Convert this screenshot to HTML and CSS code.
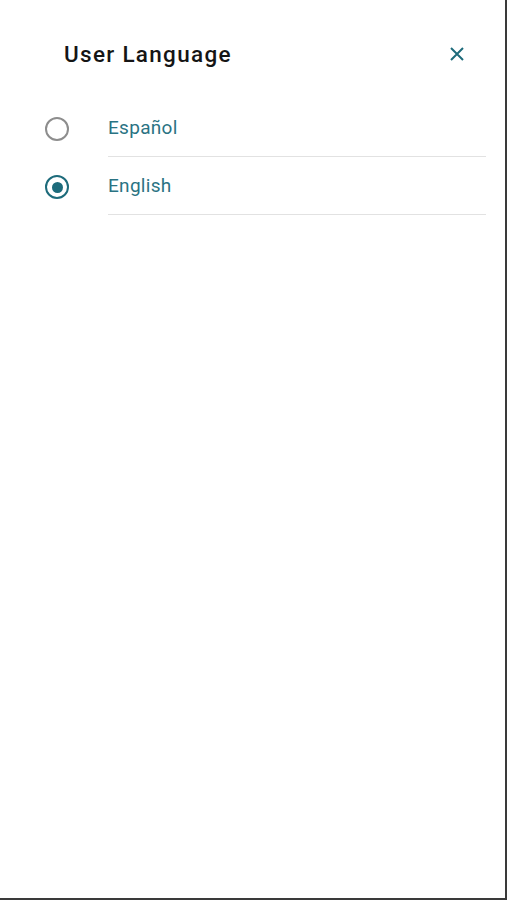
FILE: index.html
```html
<html lang="en">

<head>
    <meta charset="UTF-8">
    <meta name="viewport" content="width=device-width, initial-scale=1.0">
    <title>User Language</title>
    <link rel="stylesheet" href="styles.css">
</head>

<body>
    <div class="sheet">
        <div class="sheet-header">
            <h2>User Language</h2>
            <button class="close-btn" aria-label="Close">
                <svg width="14" height="14" viewBox="0 0 14 14">
                    <path d="M1 1 L13 13 M13 1 L1 13" stroke="#1d6b7b" stroke-width="2" fill="none" />
                </svg>
            </button>
        </div>

        <div class="lang-list">
            <label class="lang-item">
                <span class="radio-cell"><span class="radio"></span></span>
                <span class="lang-name">Español</span>
            </label>
            <label class="lang-item">
                <span class="radio-cell"><span class="radio checked"></span></span>
                <span class="lang-name">English</span>
            </label>
        </div>
    </div>
</body>

</html>
```

FILE: styles.css
```css
body {
    font-family: Roboto, "Noto Sans", Arial, sans-serif;
    margin: 0;
    background-color: #fff;
}

.sheet {
    box-sizing: border-box;
    height: 900px;
    border-right: 2px solid #3a3a3a;
    border-bottom: 2px solid #3a3a3a;
    background-color: #fff;
}

.sheet-header {
    display: flex;
    align-items: center;
    justify-content: space-between;
    padding: 32px 41px 0 64px;
    height: 44px;
}

.sheet-header h2 {
    margin: 0;
    font-size: 22.5px;
    font-weight: 500;
    letter-spacing: 1.3px;
    color: #151515;
    line-height: 44px;
}

.close-btn {
    border: none;
    background: none;
    padding: 0;
    width: 14px;
    height: 14px;
    cursor: pointer;
}

.close-btn svg {
    display: block;
}

.lang-list {
    margin-top: 23px;
}

.lang-item {
    display: flex;
    height: 58px;
    cursor: pointer;
}

.radio-cell {
    width: 108px;
    display: flex;
    align-items: center;
    padding-left: 45px;
    box-sizing: border-box;
}

.radio {
    box-sizing: border-box;
    width: 24px;
    height: 24px;
    border-radius: 50%;
    border: 2px solid #8d8d8d;
    display: flex;
    align-items: center;
    justify-content: center;
    margin-top: 2px;
}

.radio.checked {
    border: 2.5px solid #1d6b7b;
}

.radio.checked::after {
    content: "";
    width: 11px;
    height: 11px;
    border-radius: 50%;
    background-color: #1d6b7b;
}

.lang-name {
    flex: 1;
    display: flex;
    align-items: center;
    margin-right: 19px;
    border-bottom: 1px solid #e2e2e2;
    font-size: 19px;
    letter-spacing: 0.3px;
    color: #2a7383;
}
```
